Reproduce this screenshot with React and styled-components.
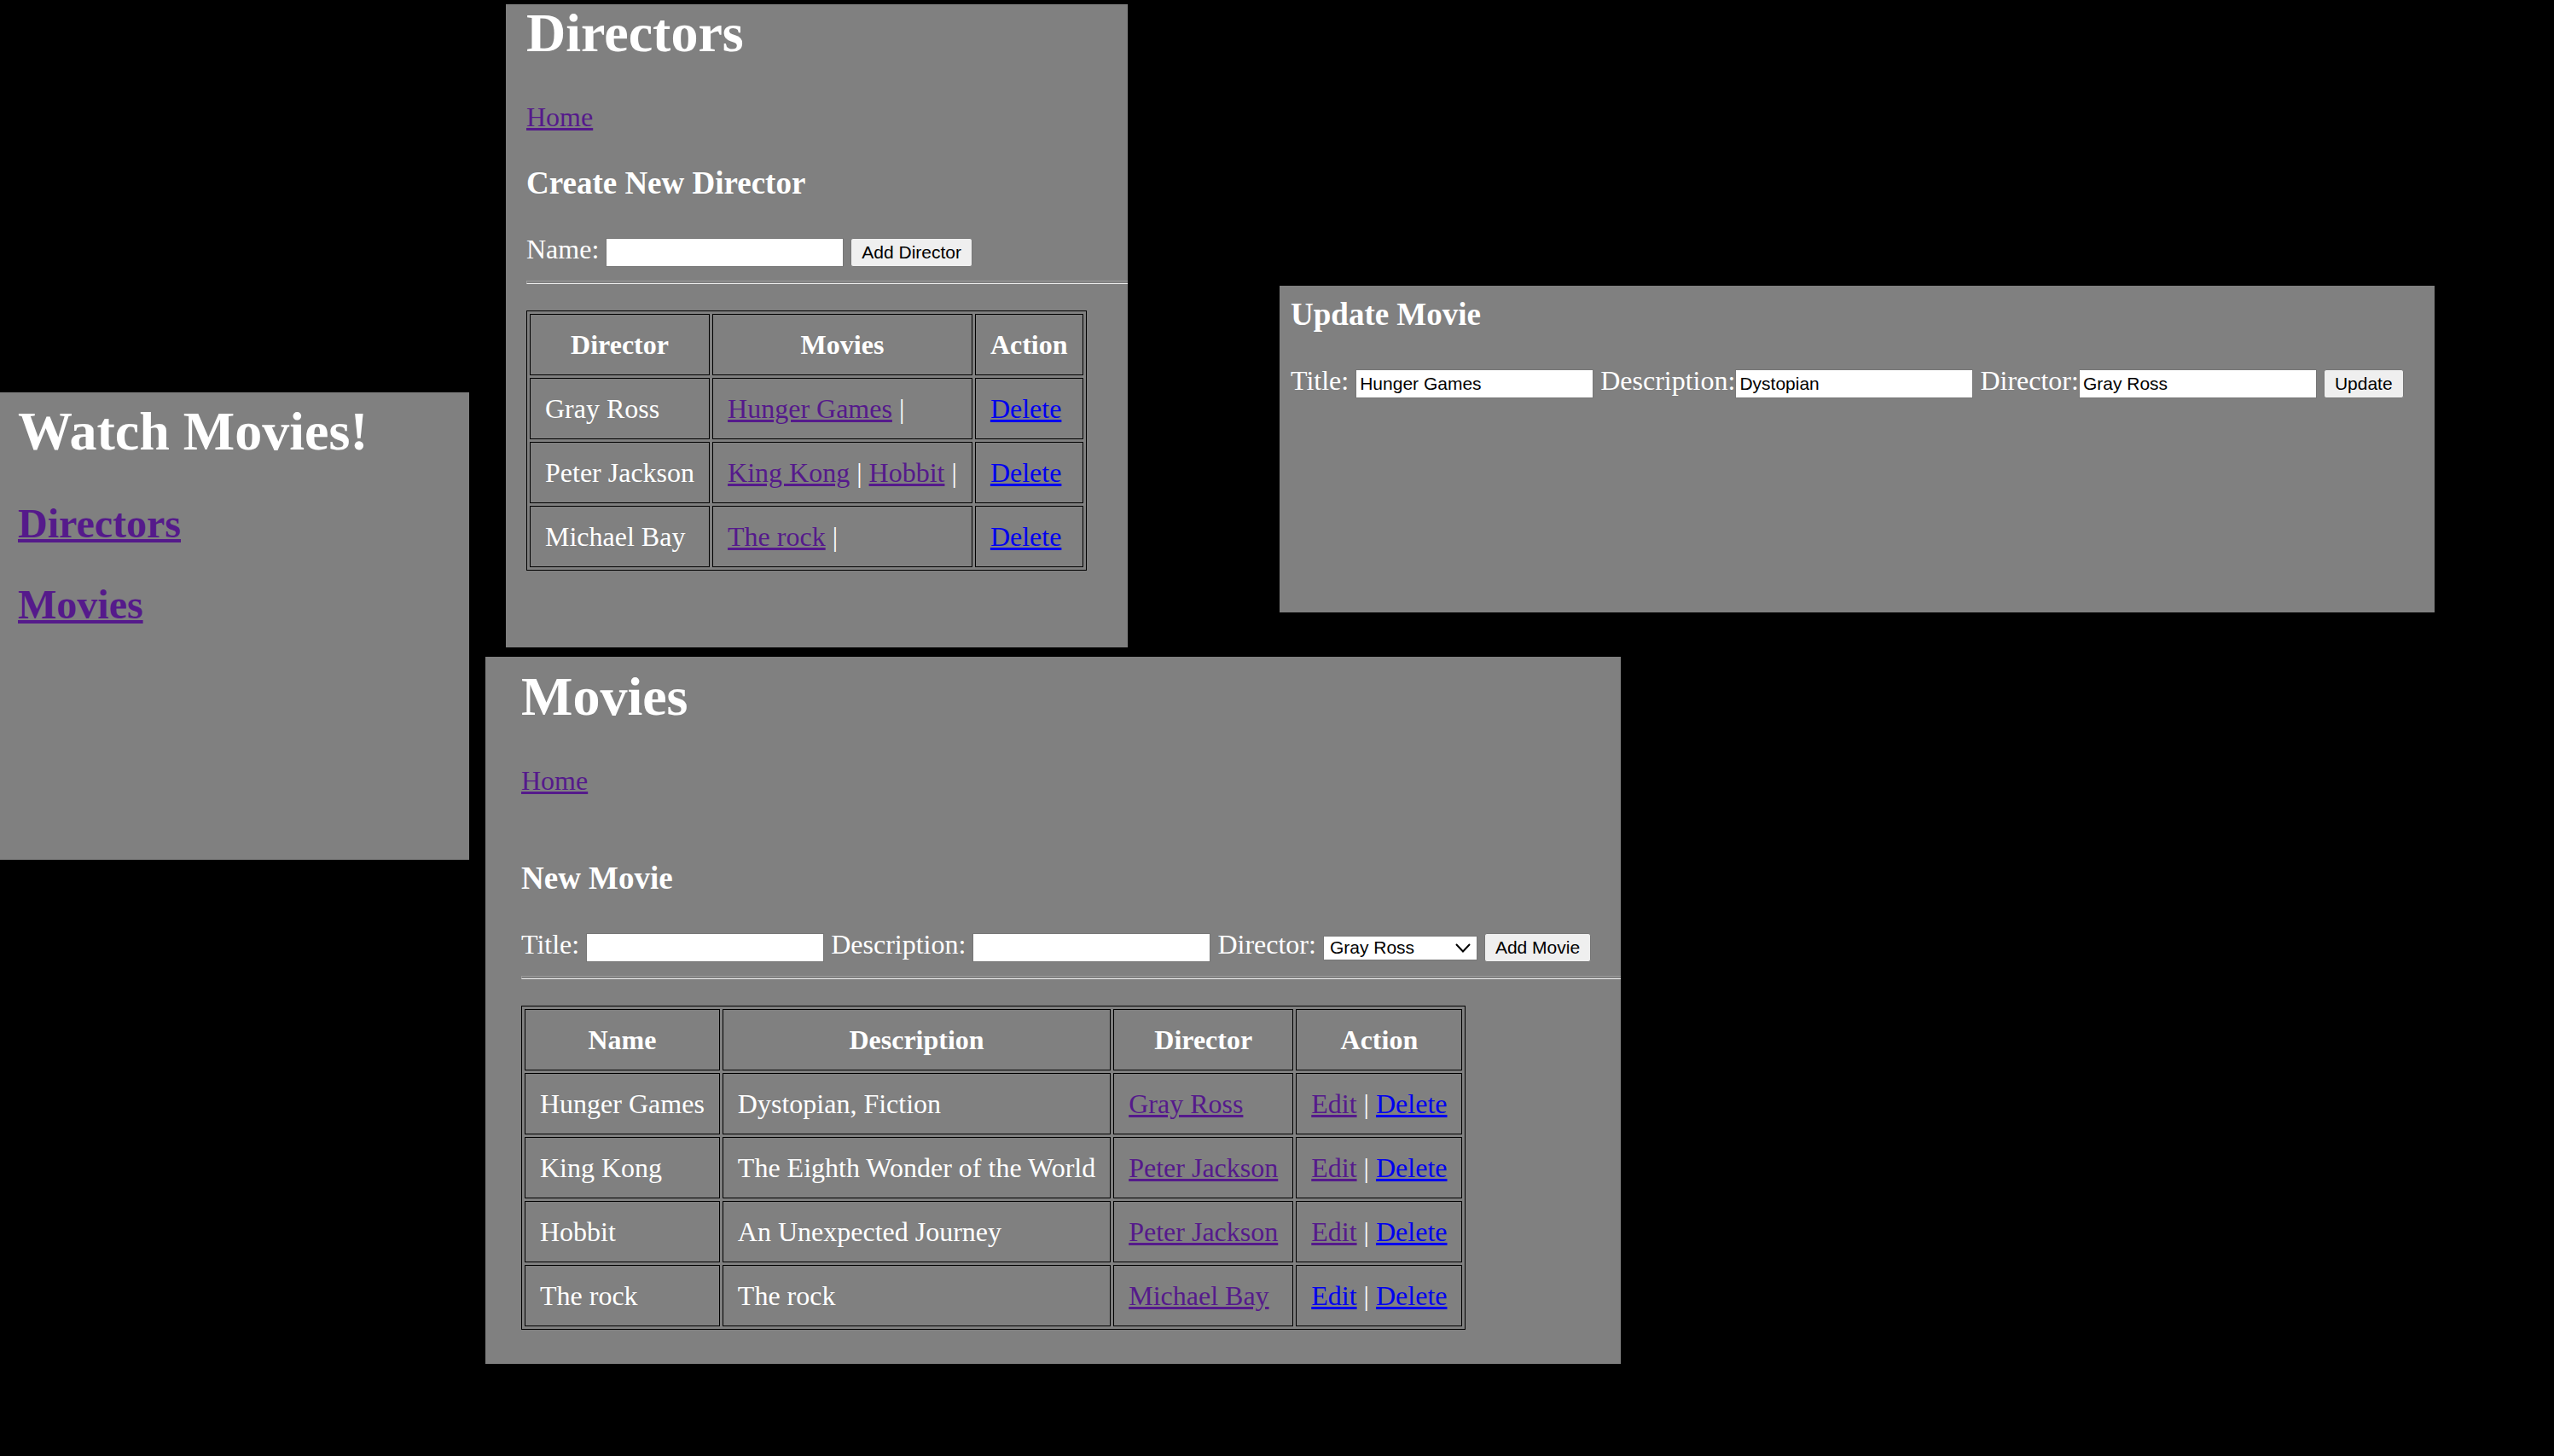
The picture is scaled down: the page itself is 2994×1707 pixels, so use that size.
import React from "react";
import styled, { createGlobalStyle } from "styled-components";

const GlobalStyle = createGlobalStyle`
  body {
    margin: 0;
    background: #000;
    color: #fff;
    font: 32px/37px "Liberation Serif", "Times New Roman", serif;
  }
  *, *::before, *::after {
    box-sizing: border-box;
  }
`;

const Page = styled.div`
  display: grid;
  grid-template-columns: minmax(0, 550fr) minmax(0, 2425fr);
  column-gap: 19px;
  align-items: start;
`;

const Workspace = styled.main`
  display: grid;
  row-gap: 11px;
`;

const TopRow = styled.div`
  display: grid;
  grid-template-columns: minmax(0, 729fr) minmax(0, 1354fr);
  column-gap: 178px;
  align-items: start;
  padding: 5px 140px 0 24px;
`;

const BottomRow = styled.div`
  display: grid;
  grid-template-columns: minmax(0, 1331fr) minmax(0, 1094fr);
`;

const Panel = styled.section`
  background: #808080;
`;

const HomePanel = styled(Panel)`
  margin-top: 460px;
  min-height: 548px;
  padding: 14px 0 0 21px;
`;

const DirectorsPanel = styled(Panel)`
  padding: 2px 0 90px 24px;
`;

const UpdatePanel = styled(Panel)`
  margin-top: 330px;
  min-height: 383px;
  padding: 15px 0 0 13px;
`;

const MoviesPanel = styled(Panel)`
  padding: 15px 0 40px 42px;
`;

const Title = styled.h1`
  margin: 0;
  font-size: 64px;
  line-height: 64px;
`;

const HomeNav = styled.nav`
  display: grid;
  row-gap: 47px;
  margin-top: 52px;
`;

const NavHeading = styled.h2`
  margin: 0;
  font-size: 48px;
  line-height: 48px;
`;

const Subtitle = styled.h3`
  margin: 0;
  font-size: 37px;
  line-height: 37px;
`;

const Link = styled.a`
  color: ${(p) => (p.$visited ? "#551a8b" : "#0000ee")};
  text-decoration-line: underline;
  text-decoration-thickness: ${(p) => (p.$heading ? "4px" : "3px")};
`;

const BackLink = styled.p`
  margin: 48px 0 ${(p) => (p.$spacious ? "77px" : "40px")};
`;

const Form = styled.form`
  margin: 41px 0 0;
`;

const TextInput = styled.input`
  width: 279px;
  height: 34px;
  padding: 4px;
  border: 1px solid #767676;
  border-radius: 0;
  background: #fff;
  color: #000;
  font: 21px/24px "Liberation Sans", Arial, sans-serif;
`;

const Button = styled.button`
  height: 34px;
  padding: 4px 12px;
  border: 1px solid #767676;
  border-radius: 3px;
  background: #efefef;
  color: #000;
  font: 21px/24px "Liberation Sans", Arial, sans-serif;
`;

const SelectBox = styled.span`
  display: inline-grid;
  align-items: baseline;
`;

const Select = styled.select`
  grid-area: 1 / 1;
  appearance: none;
  width: 181px;
  height: 29px;
  padding: 1px 32px 1px 7px;
  border: 1px solid #767676;
  border-radius: 0;
  background: #fff;
  color: #000;
  font: 21px/24px "Liberation Sans", Arial, sans-serif;
`;

const Chevron = styled.svg`
  grid-area: 1 / 1;
  place-self: center end;
  margin-right: 8px;
  pointer-events: none;
`;

const Divider = styled.hr`
  height: 4px;
  margin: 16px 0 31px;
  border: solid #9a9a9a;
  border-width: 1px 0 1px 1px;
  border-bottom-color: #eee;
`;

const Table = styled.table`
  border: 1px solid #000;
  border-collapse: separate;
  border-spacing: 3px;
  line-height: 38px;
  white-space: nowrap;

  th,
  td {
    padding: 16px 17px;
    border: 1px solid #000;
  }
`;

const directors = [
  { name: "Gray Ross", movies: ["Hunger Games"] },
  { name: "Peter Jackson", movies: ["King Kong", "Hobbit"] },
  { name: "Michael Bay", movies: ["The rock"] },
];

const movies = [
  { name: "Hunger Games", description: "Dystopian, Fiction", director: "Gray Ross", edited: true },
  { name: "King Kong", description: "The Eighth Wonder of the World", director: "Peter Jackson", edited: true },
  { name: "Hobbit", description: "An Unexpected Journey", director: "Peter Jackson", edited: true },
  { name: "The rock", description: "The rock", director: "Michael Bay", edited: false },
];

const stop = (e) => e.preventDefault();

function Home() {
  return (
    <HomePanel>
      <Title>Watch Movies!</Title>
      <HomeNav>
        <NavHeading><Link href="#directors" $visited $heading>Directors</Link></NavHeading>
        <NavHeading><Link href="#movies" $visited $heading>Movies</Link></NavHeading>
      </HomeNav>
    </HomePanel>
  );
}

function Directors() {
  return (
    <DirectorsPanel id="directors">
      <Title>Directors</Title>
      <BackLink><Link href="#home" $visited>Home</Link></BackLink>
      <Subtitle>Create New Director</Subtitle>
      <Form onSubmit={stop}>
        <label htmlFor="director-name">Name:</label>{" "}
        <TextInput id="director-name" type="text" />{" "}
        <Button type="submit">Add Director</Button>
      </Form>
      <Divider />
      <Table>
        <thead>
          <tr><th>Director</th><th>Movies</th><th>Action</th></tr>
        </thead>
        <tbody>
          {directors.map((d) => (
            <tr key={d.name}>
              <td>{d.name}</td>
              <td>
                {d.movies.map((m) => (
                  <React.Fragment key={m}>
                    <Link href="#movies" $visited>{m}</Link>{" | "}
                  </React.Fragment>
                ))}
              </td>
              <td><Link href="#delete">Delete</Link></td>
            </tr>
          ))}
        </tbody>
      </Table>
    </DirectorsPanel>
  );
}

function UpdateMovie() {
  return (
    <UpdatePanel>
      <Subtitle>Update Movie</Subtitle>
      <Form onSubmit={stop}>
        <label htmlFor="update-title">Title:</label>{" "}
        <TextInput id="update-title" type="text" defaultValue="Hunger Games" />{" "}
        <label htmlFor="update-description">Description:</label>
        <TextInput id="update-description" type="text" defaultValue="Dystopian" />{" "}
        <label htmlFor="update-director">Director:</label>
        <TextInput id="update-director" type="text" defaultValue="Gray Ross" />{" "}
        <Button type="submit">Update</Button>
      </Form>
    </UpdatePanel>
  );
}

function Movies() {
  return (
    <MoviesPanel id="movies">
      <Title>Movies</Title>
      <BackLink $spacious><Link href="#home" $visited>Home</Link></BackLink>
      <Subtitle>New Movie</Subtitle>
      <Form onSubmit={stop}>
        <label htmlFor="movie-title">Title:</label>{" "}
        <TextInput id="movie-title" type="text" />{" "}
        <label htmlFor="movie-description">Description:</label>{" "}
        <TextInput id="movie-description" type="text" />{" "}
        <label htmlFor="movie-director">Director:</label>{" "}
        <SelectBox>
          <Select id="movie-director" defaultValue="Gray Ross">
            {directors.map((d) => <option key={d.name}>{d.name}</option>)}
          </Select>
          <Chevron width="18" height="11" viewBox="0 0 18 11" fill="none" aria-hidden="true">
            <path d="M1 1 L9 9.5 L17 1" stroke="#000" strokeWidth="2" />
          </Chevron>
        </SelectBox>{" "}
        <Button type="submit">Add Movie</Button>
      </Form>
      <Divider />
      <Table>
        <thead>
          <tr><th>Name</th><th>Description</th><th>Director</th><th>Action</th></tr>
        </thead>
        <tbody>
          {movies.map((m) => (
            <tr key={m.name}>
              <td>{m.name}</td>
              <td>{m.description}</td>
              <td><Link href="#directors" $visited>{m.director}</Link></td>
              <td>
                <Link href="#edit" $visited={m.edited}>Edit</Link>{" | "}
                <Link href="#delete">Delete</Link>
              </td>
            </tr>
          ))}
        </tbody>
      </Table>
    </MoviesPanel>
  );
}

export default function App() {
  return (
    <>
      <GlobalStyle />
      <Page id="home">
        <Home />
        <Workspace>
          <TopRow>
            <Directors />
            <UpdateMovie />
          </TopRow>
          <BottomRow>
            <Movies />
          </BottomRow>
        </Workspace>
      </Page>
    </>
  );
}
